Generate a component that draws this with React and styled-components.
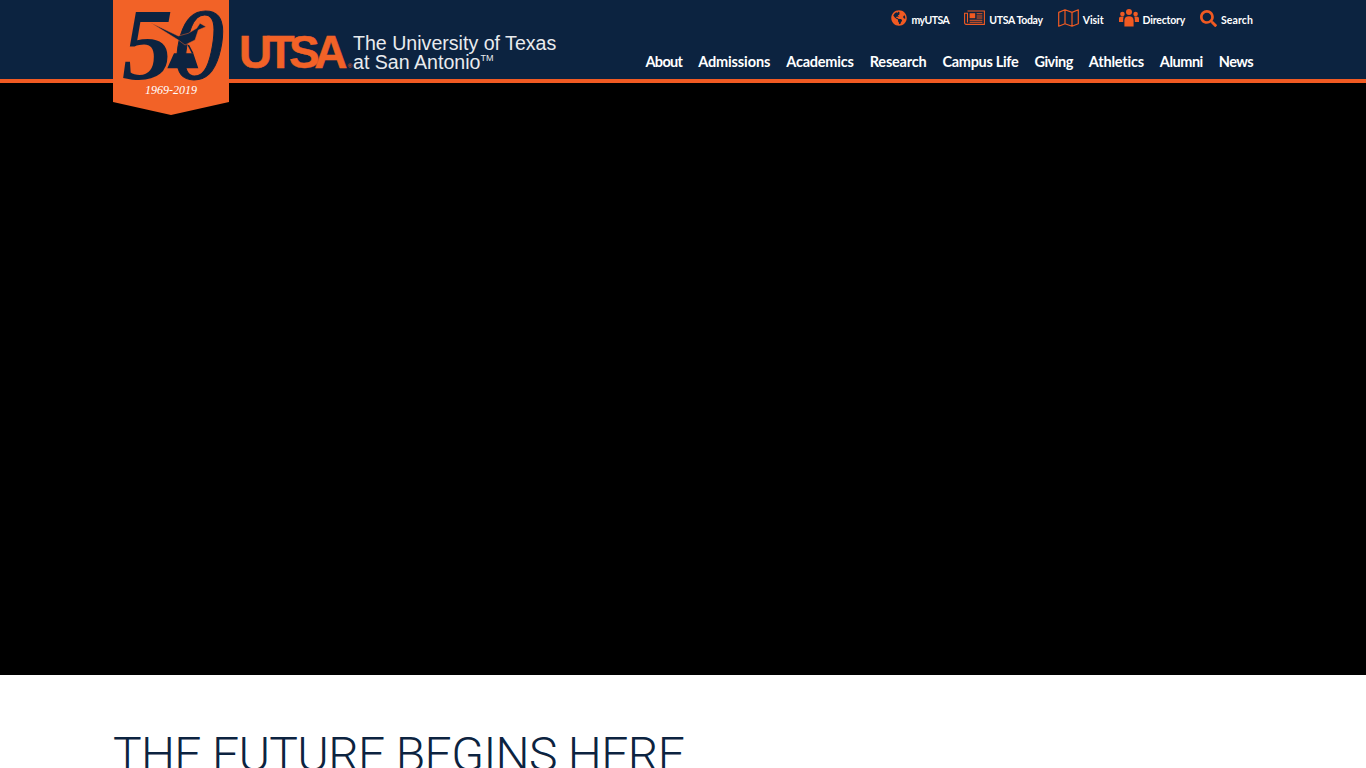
import React from 'react'
import styled, { createGlobalStyle } from 'styled-components'
import { FaGlobeAmericas, FaSearch } from 'react-icons/fa'

const GlobalStyle = createGlobalStyle`
  html, body {
    margin: 0;
    padding: 0;
    overflow: hidden;
    background: #fff;
  }
`

const Header = styled.header`
  background: #0c2340;
  border-bottom: 4px solid #f15a22;
  height: 79px;
`

const Inner = styled.div`
  position: relative;
  width: 1140px;
  height: 100%;
  margin: 0 auto;
  display: flex;
  justify-content: space-between;
`

const Badge = styled.div`
  position: absolute;
  left: 0;
  top: 0;
  width: 116px;
  height: 115px;
  z-index: 2;
  background: #f26227;
  clip-path: polygon(0 0, 100% 0, 100% 102px, 50% 100%, 0 102px);
`

const Wordmark = styled.a`
  margin: 32px 0 0 126px;
  display: flex;
  align-items: flex-start;
  height: 40px;
`

const Utsa = styled.span`
  font: bold 46px/40px "Liberation Sans", sans-serif;
  letter-spacing: -5.6px;
  -webkit-text-stroke: 0.5px #f26227;
  color: #f26227;
  width: 114px;
  white-space: nowrap;

  sup {
    font-size: 6px;
    font-weight: 400;
    letter-spacing: 0;
    line-height: 0;
    vertical-align: baseline;
    margin-left: 6px;
    -webkit-text-stroke: 0;
  }
`

const Tagline = styled.span`
  font: 19.6px/19px "Liberation Sans", sans-serif;
  color: #e9ebee;
  margin-top: 2px;
  display: block;
  white-space: nowrap;

  sup {
    font-size: 9px;
    line-height: 0;
    vertical-align: 8px;
  }
`

const Right = styled.div`
  display: flex;
  flex-direction: column;
  align-items: flex-end;
`

const Utility = styled.ul`
  list-style: none;
  margin: 10px 0 0;
  padding: 0;
  display: flex;
  gap: 15px;
  height: 20px;
`

const UtilityItem = styled.li`
  display: flex;
  align-items: center;
  gap: 4px;
  color: #fff;
  font: 700 10.5px/20px Lato, sans-serif;
  letter-spacing: ${p => p.$spacing}px;

  svg {
    color: #f15a22;
    margin-top: -4px;
  }
`

const Menu = styled.ul`
  list-style: none;
  margin: 22px 0 0;
  padding: 0;
  display: flex;
  gap: 16px;
`

const MenuItem = styled.li`
  color: #fff;
  font: 700 14.5px/20px Lato, sans-serif;
  letter-spacing: ${p => p.$spacing}px;
  white-space: nowrap;
`

const Hero = styled.div`
  height: 592px;
  background: #000;
`

const Section = styled.section`
  width: 1140px;
  margin: 0 auto;
  padding-top: 50px;
`

const Heading = styled.h1`
  margin: 0;
  font: 300 48px/60px Roboto, sans-serif;
  letter-spacing: -0.65px;
  color: #0c2340;
  white-space: nowrap;
`

const NewsIcon = () => (
  <svg width="21" height="16" viewBox="0 0 21 16" fill="none" stroke="currentColor" strokeWidth="1.1">
    <path d="M3.5 1H20.4V14.4H2.2C1.2 14.4.6 13.7.6 12.8V3.2H3.5V12.6" />
    <rect x="5.6" y="3.2" width="5.6" height="5" fill="currentColor" stroke="none" />
    <path d="M12.6 3.8H18.4M12.6 6H18.4M12.6 8H18.4M5.6 10.2H18.4M5.6 12.2H18.4" />
  </svg>
)

const MapIcon = () => (
  <svg width="21" height="18" viewBox="0 0 21 18" fill="none" stroke="currentColor" strokeWidth="1.2" strokeLinejoin="round">
    <path d="M.7 3.4 7 .8 14 3.4 20.3.8V14.8L14 17.2 7 14.8.7 17.2ZM7 .8V14.8M14 3.4V17.2" />
  </svg>
)

const PeopleIcon = () => (
  <svg width="20" height="18" viewBox="0 0 20 18" fill="currentColor">
    <circle cx="10" cy="3" r="3" />
    <circle cx="3.4" cy="5" r="2.3" />
    <circle cx="16.6" cy="5" r="2.3" />
    <path d="M5.4 17.6V11.4C5.4 8.8 7 7.2 10 7.2S14.6 8.8 14.6 11.4V17.6Z" />
    <path d="M0 13V9.8C0 8.4 1 7.6 2.6 7.6H4.8C4.2 8.8 4.2 10 4.2 13ZM20 13V9.8C20 8.4 19 7.6 17.4 7.6H15.2C15.8 8.8 15.8 10 15.8 13Z" />
  </svg>
)

const utilityLinks = [
  { title: 'myUTSA', icon: <FaGlobeAmericas size={16} />, spacing: -0.55 },
  { title: 'UTSA Today', icon: <NewsIcon />, spacing: -0.32 },
  { title: 'Visit', icon: <MapIcon />, spacing: -0.05 },
  { title: 'Directory', icon: <PeopleIcon />, spacing: -0.22 },
  { title: 'Search', icon: <FaSearch size={17} />, spacing: 0.1 },
]

const navList = [
  { title: 'About', spacing: -0.72 },
  { title: 'Admissions', spacing: -0.12 },
  { title: 'Academics', spacing: -0.21 },
  { title: 'Research', spacing: -0.2 },
  { title: 'Campus Life', spacing: -0.32 },
  { title: 'Giving', spacing: -0.49 },
  { title: 'Athletics', spacing: -0.21 },
  { title: 'Alumni', spacing: -0.49 },
  { title: 'News', spacing: -0.57 },
]

const Logo = () => (
  <svg width="116" height="115" viewBox="0 0 116 115">
    <text x="9" y="79" fontFamily="Liberation Serif" fontStyle="italic" fontWeight="700" fontSize="102" fill="#0c2340">5</text>
    <text x="60" y="79" fontFamily="Liberation Serif" fontStyle="italic" fontSize="102" fill="#0c2340" stroke="#0c2340" strokeWidth="1">0</text>
    <path d="M37.7 22.7 65.3 36 75.3 33.3 83.7 28.3 87 23.3 93 26.7 85.3 30 82 40 72 45 65.3 40Z" fill="#0c2340" stroke="#f26227" strokeWidth="0.5" />
    <path d="M68.7 45 65.3 53.3M75.3 45 79.7 53.3" stroke="#0c2340" strokeWidth="1.6" fill="none" />
    <path d="M54.3 68.3H85.3L80.3 53.3H61Z" fill="#0c2340" />
    <text x="32" y="94" fontFamily="Liberation Serif" fontStyle="italic" fontSize="12" fill="#fff">1969-2019</text>
  </svg>
)

const App = () => {
  return (
    <>
      <GlobalStyle />
      <Header>
        <Inner>
          <Badge><Logo /></Badge>
          <Wordmark>
            <Utsa>UTSA<sup>®</sup></Utsa>
            <Tagline>The University of Texas<br />at San Antonio<sup>TM</sup></Tagline>
          </Wordmark>
          <Right>
            <Utility>
              {utilityLinks.map(({ title, icon, spacing }) => (
                <UtilityItem key={title} $spacing={spacing}>{icon}{title}</UtilityItem>
              ))}
            </Utility>
            <Menu>
              {navList.map(({ title, spacing }) => (
                <MenuItem key={title} $spacing={spacing}>{title}</MenuItem>
              ))}
            </Menu>
          </Right>
        </Inner>
      </Header>
      <Hero />
      <Section>
        <Heading>THE FUTURE BEGINS HERE</Heading>
      </Section>
    </>
  )
}

export default App
